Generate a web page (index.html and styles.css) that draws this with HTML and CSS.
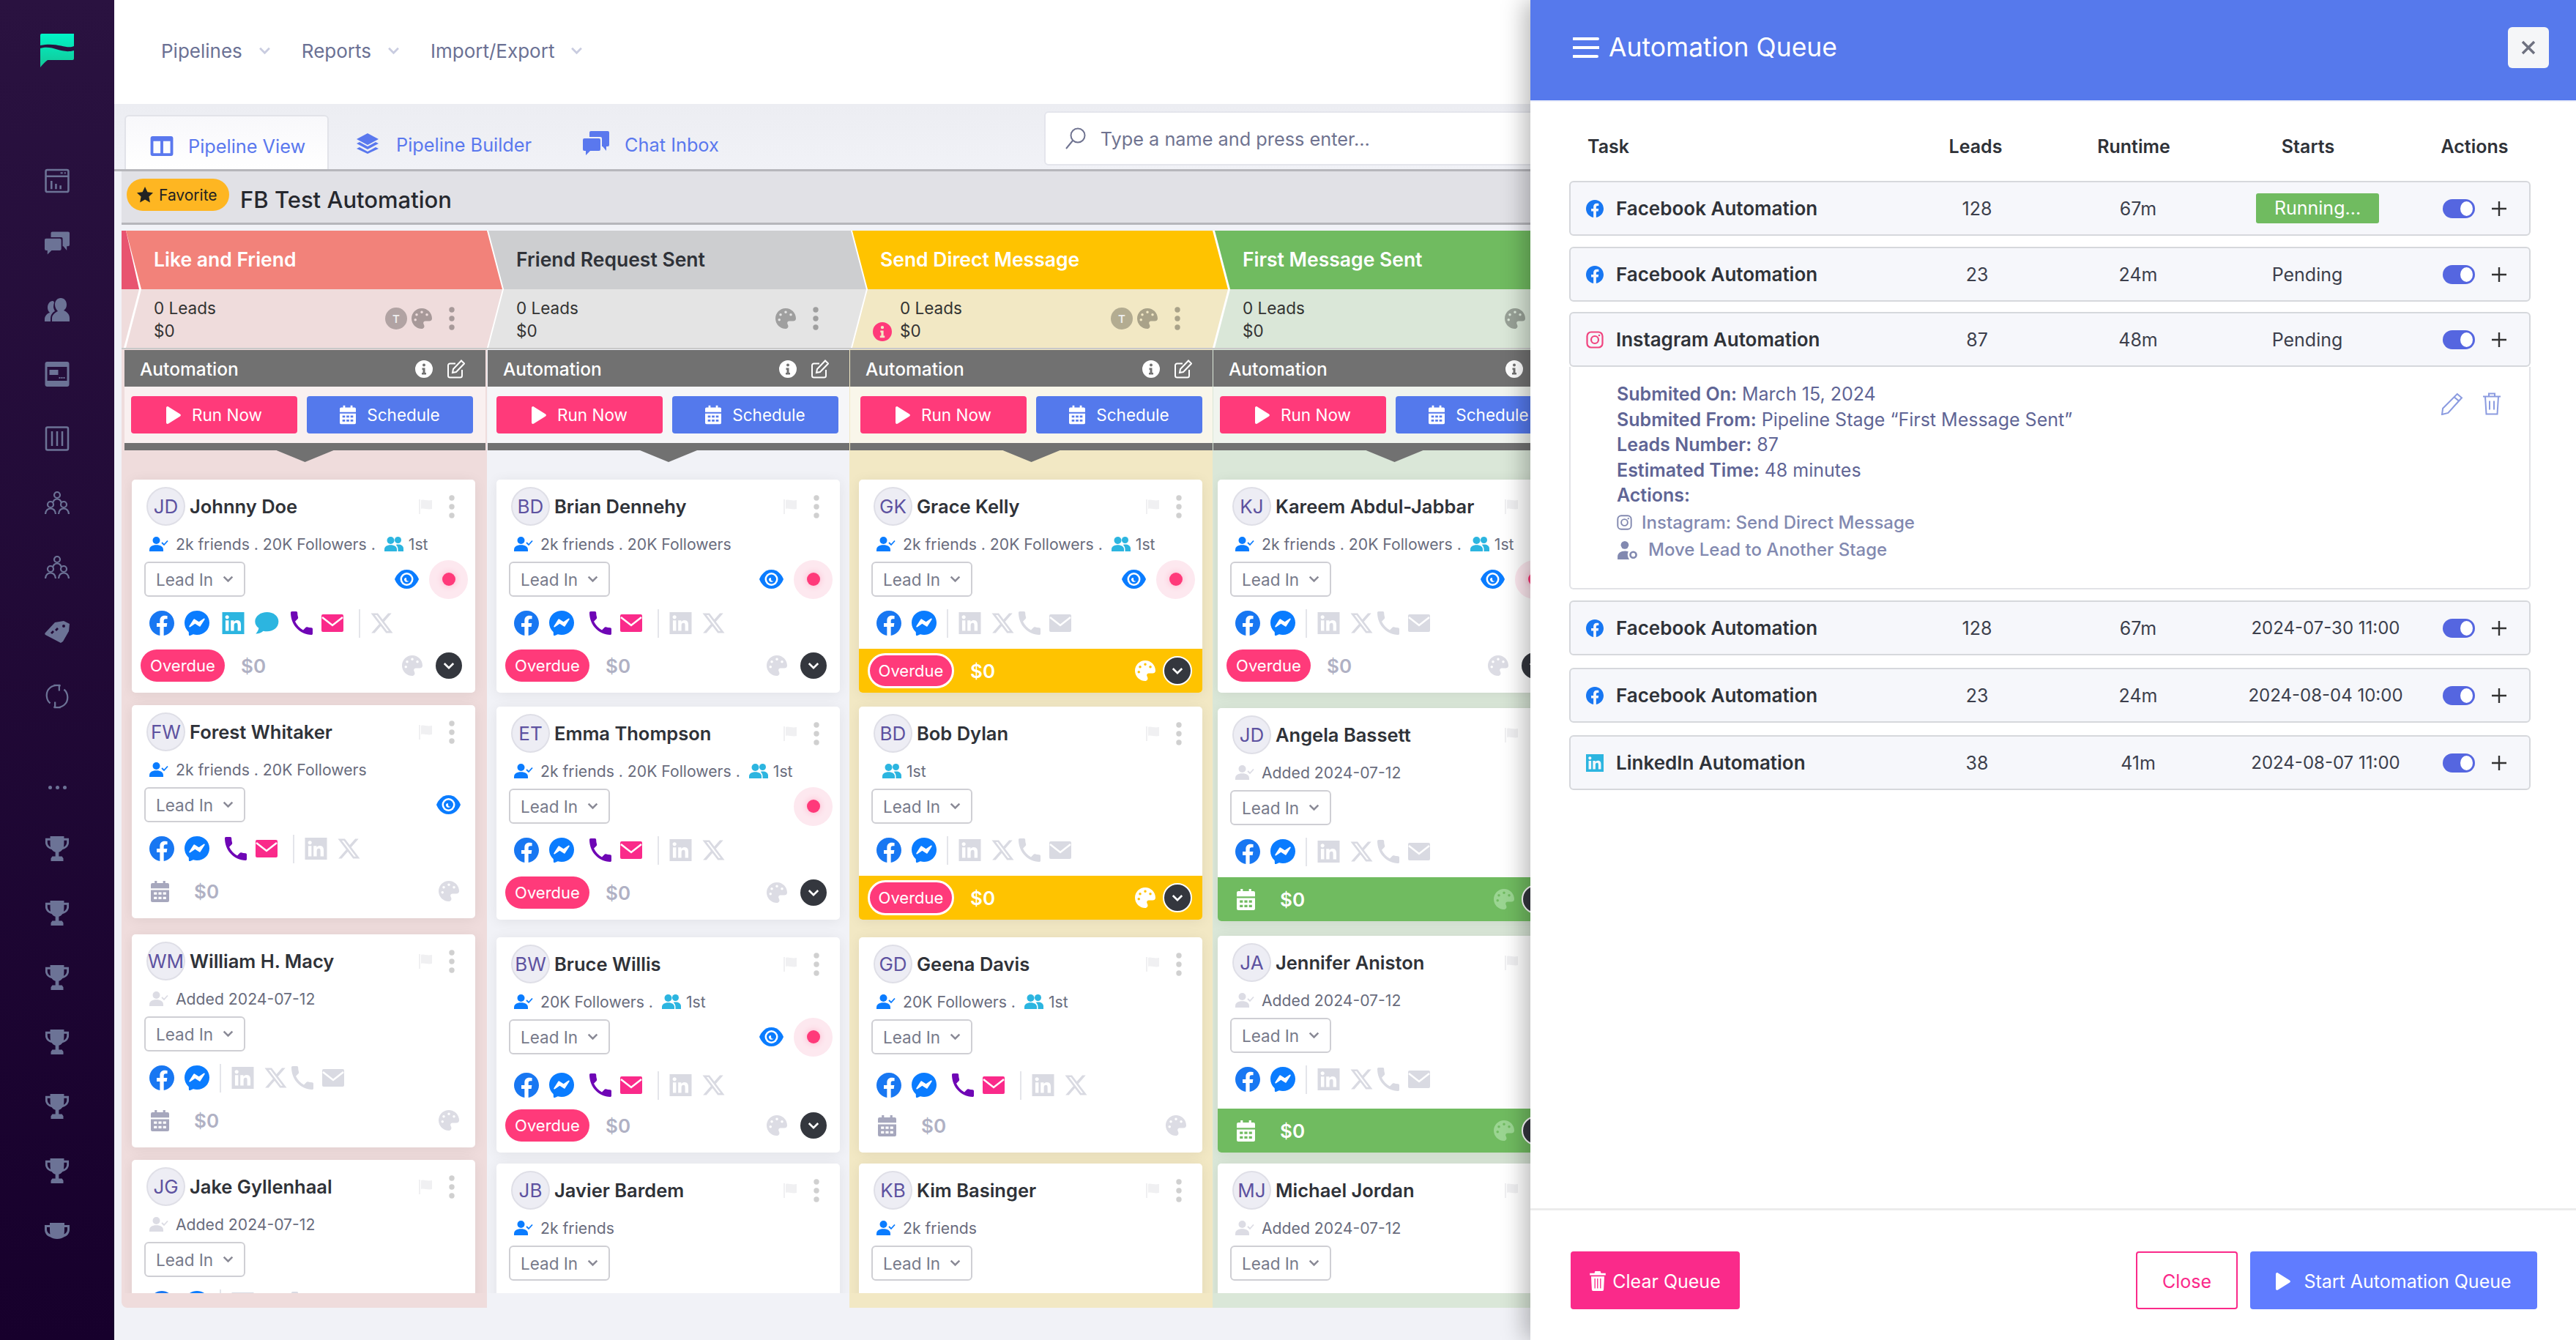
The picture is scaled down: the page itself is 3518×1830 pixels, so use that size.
FILE: index.html
```html
<!DOCTYPE html>
<html lang="en">
<head>
    <meta charset="UTF-8">
    <title>Pipeline View</title>
    <link rel="stylesheet" href="styles.css">
</head>
<body>
    <svg class="defs" xmlns="http://www.w3.org/2000/svg">
        <linearGradient id="g-logo" gradientUnits="userSpaceOnUse" x1="0" y1="0" x2="0" y2="46"><stop offset="0" stop-color="#00f5c8"/><stop offset="1" stop-color="#14c596"/></linearGradient>
        <symbol id="i-fb" viewBox="0 0 24 24"><path d="M24 12.07C24 5.4 18.63 0 12 0S0 5.4 0 12.07c0 6.03 4.39 11.02 10.13 11.93v-8.44H7.08v-3.49h3.05V9.41c0-3.02 1.79-4.69 4.53-4.69 1.31 0 2.68.24 2.68.24v2.97h-1.51c-1.49 0-1.96.93-1.96 1.89v2.26h3.33l-.53 3.49h-2.8V24C19.61 23.09 24 18.1 24 12.07z"/></symbol>
        <symbol id="i-ms" viewBox="0 0 24 24"><path d="M12 0C5.24 0 0 4.952 0 11.64c0 3.499 1.434 6.521 3.769 8.61a.96.96 0 0 1 .323.683l.065 2.135a.96.96 0 0 0 1.347.85l2.381-1.053a.96.96 0 0 1 .641-.046A13 13 0 0 0 12 23.28c6.76 0 12-4.952 12-11.64S18.76 0 12 0m6.806 7.44c.522-.03.971.567.63 1.094l-4.178 6.457a.707.707 0 0 1-.977.208l-3.87-2.504a.44.44 0 0 0-.49.007l-4.363 3.01c-.637.438-1.415-.317-.995-.966l4.179-6.457a.706.706 0 0 1 .977-.21l3.87 2.505c.15.097.344.094.491-.007l4.362-3.008a.7.7 0 0 1 .364-.13"/></symbol>
        <symbol id="i-li" viewBox="0 0 24 24"><path d="M20.447 20.452h-3.554v-5.569c0-1.328-.027-3.037-1.852-3.037-1.853 0-2.136 1.445-2.136 2.939v5.667H9.351V9h3.414v1.561h.046c.477-.9 1.637-1.85 3.37-1.85 3.601 0 4.267 2.37 4.267 5.455v6.286zM5.337 7.433c-1.144 0-2.063-.926-2.063-2.065 0-1.138.92-2.063 2.063-2.063 1.14 0 2.064.925 2.064 2.063 0 1.139-.925 2.065-2.064 2.065zm1.782 13.019H3.555V9h3.564v11.452zM24 0H0v24h24z"/></symbol>
        <symbol id="i-wa" viewBox="0 0 24 22"><path d="M12.500 0C5.900 0 .5 4 .5 9.300c0 2.700 1.400 5 3.700 6.700-.2 1.700-1.200 4-3 5.600 3 0 5.800-1 7.600-2.700 1.200.3 2.400.4 3.700.4 6.600 0 11.500-4.300 11.500-10C24 4 19.100 0 12.500 0z"/></symbol>
        <symbol id="i-ph" viewBox="3 3 18 18" preserveAspectRatio="none"><path d="M6.620 10.790c1.440 2.830 3.760 5.140 6.590 6.590l2.200-2.200c.27-.27.67-.36 1.020-.24 1.120.37 2.330.57 3.570.57.55 0 1 .45 1 1V20c0 .55-.45 1-1 1-9.390 0-17-7.610-17-17 0-.55.45-1 1-1h3.500c.55 0 1 .45 1 1 0 1.250.2 2.450.57 3.570.11.35.03.74-.25 1.020l-2.200 2.200z"/></symbol>
        <symbol id="i-em" viewBox="0 0 30 24"><rect width="30" height="24" rx="2" fill="currentColor"/><path d="M1 4l14 11L29 4" fill="none" stroke="#fff" stroke-width="2.500"/></symbol>
        <symbol id="i-x" viewBox="0 0 24 24"><path d="M18.901 1.153h3.680l-8.040 9.190L24 22.846h-7.406l-5.800-7.584-6.638 7.584H.474l8.600-9.830L0 1.154h7.594l5.243 6.932ZM17.610 20.644h2.039L6.486 3.240H4.298Z"/></symbol>
        <symbol id="i-eye" viewBox="0 0 33 26"><path d="M16.500 0C26 0 31 8 33 13c-2 5-7 13-16.500 13S2 18 0 13C2 8 7 0 16.500 0z" fill="currentColor"/><circle cx="16.500" cy="13" r="9" fill="#fff"/><circle cx="16.500" cy="13" r="6.500" fill="currentColor"/><path d="M13 14c1 3.500 5 3.500 6.500 1.500-2 .5-3.500 0-3.500-3 0-1-.2-1.500-1-1.500-1.300.3-2.300 1.500-2 3z" fill="#fff"/></symbol>
        <symbol id="i-user" viewBox="0 0 26 20"><circle cx="9.500" cy="5" r="5"/><path d="M0 20v-2c0-4.500 3.500-6.800 9.500-6.800S19 13.500 19 18v2z"/><path d="M17 8l3 3 5-5.500" fill="none" stroke="currentColor" stroke-width="1.800"/></symbol>
        <symbol id="i-group" viewBox="0 0 26 20"><circle cx="8.500" cy="5" r="5"/><circle cx="18.500" cy="4.500" r="4.500"/><path d="M0 20v-3c0-3.500 3.500-5.800 8.500-5.800s8.500 2.300 8.500 5.800v3z"/><path d="M18.500 20v-3c0-2.500-1-4.500-2.800-6 1-.4 2-.5 3-.5 4 0 7.300 2 7.300 5.500v4z"/></symbol>
        <symbol id="i-palette" viewBox="0 0 512 512"><path fill-rule="evenodd" d="M512 256c0 .9 0 1.800 0 2.700-.4 36.500-33.600 61.300-70.100 61.300H344c-26.500 0-48 21.500-48 48 0 3.400.4 6.700 1 9.900 2.100 10.200 6.500 20 10.800 29.900 6.100 13.800 12.100 27.500 12.100 42 0 31.800-21.600 60.700-53.400 62-3.500.1-7 .2-10.600.2C114.600 512 0 397.400 0 256S114.600 0 256 0s256 114.600 256 256zM128 288a32 32 0 1 0-64 0 32 32 0 1 0 64 0zm0-96a32 32 0 1 0 0-64 32 32 0 1 0 0 64zM288 96a32 32 0 1 0-64 0 32 32 0 1 0 64 0zm96 96a32 32 0 1 0 0-64 32 32 0 1 0 0 64z"/></symbol>
        <symbol id="i-cal" viewBox="0 0 24 28"><path fill-rule="evenodd" d="M5 0h3v3h8V0h3v3h3a2 2 0 0 1 2 2v5H0V5a2 2 0 0 1 2-2h3zM0 12h24v14a2 2 0 0 1-2 2H2a2 2 0 0 1-2-2zM4 15v3h4v-3zM10 15v3h4v-3zM16 15v3h4v-3zM4 21v3h4v-3zM10 21v3h4v-3zM16 21v3h4v-3z"/></symbol>
        <symbol id="i-flag" viewBox="0 0 18 20"><path d="M0 0h2v20H0zM3 1c4-1.500 8 1.500 15 0v12c-6 1.500-11-1.500-15 0z"/></symbol>
        <symbol id="i-dots" viewBox="0 0 8 32"><circle cx="4" cy="4" r="3.700"/><circle cx="4" cy="16" r="3.700"/><circle cx="4" cy="28" r="3.700"/></symbol>
        <symbol id="i-chev" viewBox="0 0 18 12"><path d="M2 2l7 7 7-7" fill="none" stroke="currentColor" stroke-width="3"/></symbol>
        <symbol id="i-play" viewBox="0 0 20 24"><path d="M0 2C0 .3 1.700-.5 3 .4l16 10c1.200.8 1.200 2.400 0 3.200L3 23.600c-1.300.9-3 .1-3-1.600z"/></symbol>
        <symbol id="i-info" viewBox="0 0 24 24"><path fill-rule="evenodd" d="M12 0a12 12 0 1 0 0 24 12 12 0 0 0 0-24zM12 4.500a2 2 0 1 1 0 4 2 2 0 0 1 0-4zM9.500 10.500h4V17H15v2.500H9V17h1.500v-4h-1z"/></symbol>
        <symbol id="i-edit" viewBox="0 0 24 26"><path d="M20 14v8a2.500 2.500 0 0 1-2.500 2.500h-14A2.500 2.500 0 0 1 1 22V8a2.500 2.500 0 0 1 2.500-2.500H11M19 1.500l4 4L12 17l-5 1 1-5z" fill="none" stroke="currentColor" stroke-width="2"/></symbol>
        <symbol id="i-chat" viewBox="0 0 36 33"><path d="M11 0h23a2 2 0 0 1 2 2v17a2 2 0 0 1-2 2h-2v6l-5-6h-1V10a2 2 0 0 0-2-2H9V2a2 2 0 0 1 2-2z"/><path d="M2 10h20a2 2 0 0 1 2 2v13a2 2 0 0 1-2 2H10l-6 6v-6H2a2 2 0 0 1-2-2V12a2 2 0 0 1 2-2z"/></symbol>
        <symbol id="i-panes" viewBox="0 0 32 28"><path fill-rule="evenodd" d="M3 0h26a3 3 0 0 1 3 3v22a3 3 0 0 1-3 3H3a3 3 0 0 1-3-3V3a3 3 0 0 1 3-3zM4 7v17h10V7zM18 7v17h10V7z"/></symbol>
        <symbol id="i-stack" viewBox="0 0 32 32"><path d="M16 0l15 8-15 8L1 8zM1 14l4-2 11 6 11-6 4 2-15 8zM1 21l4-2 11 6 11-6 4 2-15 7z"/></symbol>
        <symbol id="i-search" viewBox="0 0 30 30"><circle cx="18" cy="11" r="9.500" fill="none" stroke="currentColor" stroke-width="2"/><path d="M11 18L2 29" stroke="currentColor" stroke-width="2"/></symbol>
        <symbol id="i-star" viewBox="0 0 24 24"><path d="M12 0l3.700 7.900 8.300 1.100-6.100 5.800 1.600 8.600L12 19.200l-7.500 4.200 1.600-8.600L0 9l8.300-1.100z"/></symbol>
        <symbol id="i-layout" viewBox="0 0 33 32"><rect x="1.500" y="1.500" width="30" height="29" rx="2" fill="none" stroke="currentColor" stroke-width="2.500"/><path d="M1 10h31M9 16v11M15 20v7M21 22v5" fill="none" stroke="currentColor" stroke-width="2.500"/><path d="M21 5.500h3M26 5.500h2" stroke="currentColor" stroke-width="2"/></symbol>
        <symbol id="i-people" viewBox="0 0 34 32"><path d="M22 0c-5 0-8 4-8 9 0 4 2 7 4 9-4 2-8 5-8 10v4h24v-5c0-4-3-8-8-10 3-2 4-5 4-8 0-5-3-9-8-9z"/><path d="M11 4c-4 0-7 4-7 9 0 3 1 5 3 7-4 1-7 5-7 9v3h8v-4c0-4 2-8 6-10-1-2-2-4-2-6 0-2 .5-4 1-6-.6-1.500-1.200-2-2-2z"/></symbol>
        <symbol id="i-board" viewBox="0 0 33 34"><path fill-rule="evenodd" d="M3 0h27a3 3 0 0 1 3 3v28a3 3 0 0 1-3 3H3a3 3 0 0 1-3-3V3a3 3 0 0 1 3-3zM3 7v19h27V7zM6 11h12v7H6zM22 21h2v2h-2zM25 21h2v2h-2zM19 21h2v2h-2z"/></symbol>
        <symbol id="i-cols" viewBox="0 0 33 34"><rect x="1.500" y="1.500" width="30" height="31" rx="2" fill="none" stroke="currentColor" stroke-width="2.500"/><path d="M9.500 7v20M16.500 7v20M23.500 7v20" stroke="currentColor" stroke-width="2.500"/></symbol>
        <symbol id="i-tree" viewBox="0 0 34 32"><g fill="none" stroke="currentColor" stroke-width="2.200"><circle cx="17" cy="5" r="4"/><path d="M11 16c1-4 3-5.500 6-5.500s5 1.500 6 5.500"/><circle cx="8" cy="18" r="4"/><circle cx="26" cy="18" r="4"/><path d="M1 31c.5-5 3-7.500 7-7.500s6.500 2.500 7 7.500M19 31c.5-5 3-7.500 7-7.500s6.500 2.500 7 7.500"/></g></symbol>
        <symbol id="i-tag" viewBox="0 0 34 30"><path fill-rule="evenodd" d="M14 2L26 0l8 4-1 10-8 14-3 2L1 19c-1-1-1-2 0-3zM11 13l-3 3 2 2 3-3zM17 9l-3 3 2 2 3-3zM26 5a2 2 0 1 0 0 4 2 2 0 0 0 0-4z"/></symbol>
        <symbol id="i-refresh" viewBox="0 0 34 36"><path d="M22 2.500C9 0 1 8 2 18c.3 4 2 7.500 5 10M12 33.500C25 36 33 28 32 18c-.3-4-2-7.500-5-10M14 26v8h8M20 10V2h-8" fill="none" stroke="currentColor" stroke-width="2.400"/></symbol>
        <symbol id="i-trophy" viewBox="0 0 34 36"><path fill-rule="evenodd" d="M7 0h20v3h7v6c0 5-4 9-9 10-1.500 2-3.500 3.500-5.500 4v6H24l2 3v4H8v-4l2-3h4.500v-6c-2-.5-4-2-5.500-4-5-1-9-5-9-10V3h7zM3 6v3c0 3 2 5.500 4.500 6.500C7 13 7 10 7 6zM31 6h-4c0 4 0 7-.5 9.500C29 14.500 31 12 31 9z"/></symbol>
        <symbol id="i-cup" viewBox="0 0 34 22"><path fill-rule="evenodd" d="M7 0h20v3h7v6c0 5-3 9-7 10-3 2-6 3-10 3s-7-1-10-3c-4-1-7-5-7-10V3h7zM3 6v3c0 3 2 5.500 4.500 6.500C7 13 7 10 7 6zM31 6h-4c0 4 0 7-.5 9.500C29 14.500 31 12 31 9z"/></symbol>
        <symbol id="i-ig" viewBox="0 0 24 24"><rect x="1.500" y="1.500" width="21" height="21" rx="5.500" fill="none" stroke="currentColor" stroke-width="2.200"/><circle cx="12" cy="12" r="5" fill="none" stroke="currentColor" stroke-width="2.200"/><circle cx="18" cy="6" r="1.300"/></symbol>
        <symbol id="i-usercog" viewBox="0 0 30 28"><circle cx="11" cy="6" r="6"/><path d="M0 28v-4c0-6 5-9 11-9 2 0 4 .3 5.500 1-1 2-1.500 4-1 6 .3 2 1 4 2.500 6z"/><circle cx="24" cy="21" r="4.500" fill="none" stroke="currentColor" stroke-width="3"/></symbol>
        <symbol id="i-pencil" viewBox="0 0 30 30"><path d="M22 2l6 5L10 27l-8 2 1-8zM18 6l6 5" fill="none" stroke="currentColor" stroke-width="2"/></symbol>
        <symbol id="i-trash" viewBox="0 0 26 30"><path d="M1 5h24M9 5V1h8v4M4 5l1.500 24h15L22 5M10 11v12M16 11v12" fill="none" stroke="currentColor" stroke-width="2"/></symbol>
        <symbol id="i-trashfill" viewBox="0 0 24 30"><path fill-rule="evenodd" d="M8 0h8l1 3h7v3H0V3h7zM2 8h20l-1 20a2 2 0 0 1-2 2H5a2 2 0 0 1-2-2zM7 11v15h1.500V11zM11 11v15h1.500V11zM15.500 11v15H17V11z"/></symbol>
        <symbol id="i-plus" viewBox="0 0 22 22"><path d="M11 1v20M1 11h20" stroke="currentColor" stroke-width="2.400"/></symbol>
        <symbol id="i-close" viewBox="0 0 20 20"><path d="M2 2l16 16M18 2L2 18" stroke="currentColor" stroke-width="3.400"/></symbol>
        <symbol id="i-menu" viewBox="0 0 36 28"><path d="M1 2h33M0 14h36M1 26h32" stroke="currentColor" stroke-width="4" stroke-linecap="round"/></symbol>
        <symbol id="i-logo" viewBox="0 0 46 46"><path d="M2 0h44v17c-10 5-22-6-46-1V2a2 2 0 0 1 2-2z"/><path d="M0 20c18-5 28 8 46 3v11a2 2 0 0 1-2 2H10c-4 3-7 6-10 10z"/></symbol>
    </svg>

    <div class="app">
        <aside class="side">
            <svg class="side-logo"><use href="#i-logo"/></svg>
            <nav class="side-nav">
                <span class="side-item"><svg><use href="#i-layout"/></svg></span>
                <span class="side-item side-up"><svg><use href="#i-chat"/></svg></span>
                <span class="side-item"><svg><use href="#i-people"/></svg></span>
                <span class="side-item"><svg><use href="#i-board"/></svg></span>
                <span class="side-item"><svg><use href="#i-cols"/></svg></span>
                <span class="side-item"><svg><use href="#i-tree"/></svg></span>
                <span class="side-item"><svg><use href="#i-tree"/></svg></span>
                <span class="side-item"><svg><use href="#i-tag"/></svg></span>
                <span class="side-item"><svg><use href="#i-refresh"/></svg></span>
                <span class="side-more"><i></i><i></i><i></i></span>
                <span class="side-item"><svg><use href="#i-trophy"/></svg></span>
                <span class="side-item"><svg><use href="#i-trophy"/></svg></span>
                <span class="side-item"><svg><use href="#i-trophy"/></svg></span>
                <span class="side-item"><svg><use href="#i-trophy"/></svg></span>
                <span class="side-item"><svg><use href="#i-trophy"/></svg></span>
                <span class="side-item"><svg><use href="#i-trophy"/></svg></span>
                <span class="side-item side-cup"><svg><use href="#i-cup"/></svg></span>
            </nav>
        </aside>

        <main class="main">
            <header class="topbar">
                <a class="top-link">Pipelines<svg><use href="#i-chev"/></svg></a>
                <a class="top-link">Reports<svg><use href="#i-chev"/></svg></a>
                <a class="top-link">Import/Export<svg><use href="#i-chev"/></svg></a>
            </header>

            <div class="tabs">
                <a class="tab tab-active"><svg class="tab-panes"><use href="#i-panes"/></svg>Pipeline View</a>
                <a class="tab"><svg class="tab-stack"><use href="#i-stack"/></svg>Pipeline Builder</a>
                <a class="tab"><svg class="tab-chat"><use href="#i-chat"/></svg>Chat Inbox</a>
                <div class="search"><svg><use href="#i-search"/></svg>Type a name and press enter...</div>
            </div>

            <div class="title-bar">
                <span class="fav"><svg><use href="#i-star"/></svg>Favorite</span>
                <h1>FB Test Automation</h1>
            </div>

            <div class="stages">
                <div class="stage-edge"><div></div><div></div></div>
                <div class="stage stage-like">
                    <div class="stage-head">Like and Friend</div>
                    <div class="stage-stats">
                        <div>0 Leads<br>$0</div>
                        <div class="stage-tools"><span class="t-badge">T</span><svg class="tool-palette"><use href="#i-palette"/></svg><svg class="tool-dots"><use href="#i-dots"/></svg></div>
                    </div>
                </div>
                <div class="stage stage-friend">
                    <div class="stage-head">Friend Request Sent</div>
                    <div class="stage-stats">
                        <div>0 Leads<br>$0</div>
                        <div class="stage-tools"><svg class="tool-palette"><use href="#i-palette"/></svg><svg class="tool-dots"><use href="#i-dots"/></svg></div>
                    </div>
                </div>
                <div class="stage stage-send">
                    <div class="stage-head">Send Direct Message</div>
                    <div class="stage-stats">
                        <div class="stats-warn">0 Leads<br><svg class="warn"><use href="#i-info"/></svg>$0</div>
                        <div class="stage-tools"><span class="t-badge">T</span><svg class="tool-palette"><use href="#i-palette"/></svg><svg class="tool-dots"><use href="#i-dots"/></svg></div>
                    </div>
                </div>
                <div class="stage stage-first">
                    <div class="stage-head">First Message Sent</div>
                    <div class="stage-stats">
                        <div>0 Leads<br>$0</div>
                        <div class="stage-tools"><svg class="tool-palette"><use href="#i-palette"/></svg><svg class="tool-dots"><use href="#i-dots"/></svg></div>
                    </div>
                </div>
            </div>

            <!-- columns get filled by app.js -->
            <div class="board" id="board"></div>
        </main>

        <section class="panel">
            <div class="panel-head">
                <svg class="panel-menu"><use href="#i-menu"/></svg>
                <h2>Automation Queue</h2>
                <button class="panel-close"><svg><use href="#i-close"/></svg></button>
            </div>

            <div class="queue">
                <div class="q-grid q-labels">
                    <span class="q-task">Task</span><span>Leads</span><span class="q-runtime">Runtime</span><span class="q-starts">Starts</span><span class="q-actions">Actions</span>
                </div>

                <div class="q-grid q-row">
                    <span class="q-name"><svg class="c-fb"><use href="#i-fb"/></svg>Facebook Automation</span><span>128</span><span>67m</span>
                    <span><b class="running">Running...</b></span>
                    <span class="q-ctl"><i class="toggle"></i><svg><use href="#i-plus"/></svg></span>
                </div>
                <div class="q-grid q-row">
                    <span class="q-name"><svg class="c-fb"><use href="#i-fb"/></svg>Facebook Automation</span><span>23</span><span>24m</span>
                    <span class="q-pending">Pending</span>
                    <span class="q-ctl"><i class="toggle"></i><svg><use href="#i-plus"/></svg></span>
                </div>
                <div class="q-grid q-row q-open">
                    <span class="q-name"><svg class="c-ig"><use href="#i-ig"/></svg>Instagram Automation</span><span>87</span><span>48m</span>
                    <span class="q-pending">Pending</span>
                    <span class="q-ctl"><i class="toggle"></i><svg><use href="#i-plus"/></svg></span>
                </div>
                <div class="q-detail">
                    <div class="q-lines">
                        <p><strong>Submited On:</strong> March 15, 2024</p>
                        <p><strong>Submited From:</strong> Pipeline Stage “First Message Sent”</p>
                        <p><strong>Leads Number:</strong> 87</p>
                        <p><strong>Estimated Time:</strong> 48 minutes</p>
                        <p><strong>Actions:</strong></p>
                        <p class="q-act"><svg class="a-ig"><use href="#i-ig"/></svg>Instagram: Send Direct Message</p>
                        <p class="q-act"><svg class="a-cog"><use href="#i-usercog"/></svg>Move Lead to Another Stage</p>
                    </div>
                    <div class="q-tools"><svg class="q-pencil"><use href="#i-pencil"/></svg><svg class="q-trash"><use href="#i-trash"/></svg></div>
                </div>
                <div class="q-grid q-row">
                    <span class="q-name"><svg class="c-fb"><use href="#i-fb"/></svg>Facebook Automation</span><span>128</span><span>67m</span>
                    <span class="q-date">2024-07-30 11:00</span>
                    <span class="q-ctl"><i class="toggle"></i><svg><use href="#i-plus"/></svg></span>
                </div>
                <div class="q-grid q-row q-wide">
                    <span class="q-name"><svg class="c-fb"><use href="#i-fb"/></svg>Facebook Automation</span><span>23</span><span>24m</span>
                    <span class="q-date">2024-08-04 10:00</span>
                    <span class="q-ctl"><i class="toggle"></i><svg><use href="#i-plus"/></svg></span>
                </div>
                <div class="q-grid q-row q-wide">
                    <span class="q-name"><svg class="c-li"><use href="#i-li"/></svg>LinkedIn Automation</span><span>38</span><span>41m</span>
                    <span class="q-date">2024-08-07 11:00</span>
                    <span class="q-ctl"><i class="toggle"></i><svg><use href="#i-plus"/></svg></span>
                </div>
            </div>

            <div class="panel-foot">
                <button class="btn-clear"><svg><use href="#i-trashfill"/></svg>Clear Queue</button>
                <button class="btn-close">Close</button>
                <button class="btn-start"><svg><use href="#i-play"/></svg>Start Automation Queue</button>
            </div>
        </section>
    </div>

    <script src="app.js"></script>
</body>
</html>
```

FILE: styles.css
```css
* {
    box-sizing: border-box;
}
html, body {
    margin: 0;
    width: 3518px;
    height: 1830px;
    overflow: hidden;
}
body {
    font-family: Inter, "Noto Sans", sans-serif;
    background-color: #f1f2f7;
    color: #2f3238;
}
h1, h2, p {
    margin: 0;
}
svg {
    fill: currentColor;
    display: block;
    flex: none;
}
.defs {
    width: 0;
    height: 0;
    position: absolute;
}
.app {
    display: flex;
    height: 1830px;
    position: relative;
    overflow: hidden;
}

/* sidebar */
.side {
    width: 156px;
    flex: none;
    background: linear-gradient(#2a1240, #17002c);
    color: #6c7396;
    display: flex;
    flex-direction: column;
    align-items: center;
}
.side-logo {
    width: 46px;
    height: 46px;
    margin-top: 46px;
    fill: url(#g-logo);
}
.side-nav {
    margin-top: 111px;
    display: flex;
    flex-direction: column;
    align-items: center;
}
.side-item {
    height: 88px;
    display: flex;
    align-items: center;
}
.side-item svg {
    width: 34px;
    height: 34px;
}
.side-up {
    margin-top: -3px;
    margin-bottom: 3px;
}
.side-cup svg {
    height: 22px;
}
.side-cup {
    margin-top: -6px;
}
.side-more {
    height: 120px;
    margin: 20px 0 -20px;
    display: flex;
    gap: 5px;
    align-items: center;
}
.side-more i {
    width: 5px;
    height: 5px;
    border-radius: 50%;
    background: #6c7396;
}

/* top */
.main {
    flex: 1;
    min-width: 0;
    overflow: hidden;
}
.topbar {
    height: 142px;
    background-color: #fff;
    display: flex;
    align-items: center;
    padding-left: 64px;
    padding-bottom: 4px;
    font-size: 26px;
    color: #6b7194;
    gap: 42px;
}
.top-link {
    display: flex;
    align-items: center;
    gap: 22px;
}
.top-link svg {
    width: 17px;
    height: 11px;
    color: #c9cce0;
}
.tabs {
    height: 92px;
    display: flex;
    padding-left: 14px;
    background: linear-gradient(#ecedf2, #f1f2f7);
    border-bottom: 3px solid #b6b6bb;
}
.tab {
    display: flex;
    align-items: center;
    padding: 22px 33px 0 37px;
    gap: 23px;
    font-size: 25.3px;
    color: #5a78ee;
}
.tab-active {
    margin-top: 15px;
    padding: 8px 33px 0;
    gap: 20px;
    width: 279px;
    background: linear-gradient(#f8f8fb, #fff);
    border: 2px solid #e2e3e9;
    border-bottom: none;
    border-radius: 6px 6px 0 0;
    white-space: nowrap;
}
.tab-panes {
    width: 32px;
    height: 27px;
}
.tab-stack {
    width: 32px;
    height: 32px;
}
.tab-chat {
    width: 36px;
    height: 33px;
    margin-right: -2px;
    margin-top: -5px;
}
.search {
    margin-left: 411px;
    margin-top: 10px;
    height: 74px;
    width: 800px;
    flex: none;
    background-color: #fff;
    border: 2px solid #e4e5ec;
    border-radius: 6px;
    display: flex;
    align-items: center;
    padding-left: 26px;
    gap: 19px;
    font-size: 25.3px;
    color: #6f7390;
}
.search svg {
    width: 30px;
    height: 30px;
}
.title-bar {
    margin-left: 10px;
    height: 73px;
    background-color: #e1e1e6;
    border-bottom: 3px solid #b6b6bb;
    display: flex;
    align-items: center;
    padding-left: 7px;
    gap: 15px;
}
.fav {
    height: 44px;
    width: 140px;
    margin-top: -6px;
    border-radius: 22px;
    background-color: #feb622;
    color: #222;
    font-size: 21px;
    display: flex;
    align-items: center;
    padding-left: 14px;
    gap: 8px;
}
.fav svg {
    width: 22px;
    height: 24px;
}
h1 {
    margin-top: 6px;
    font-size: 31px;
    font-weight: 500;
    color: #26282e;
}

/* stage chevrons */
.stages {
    margin: 8px 0 0 10px;
    display: flex;
    height: 160px;
    background-color: #fff;
}
.stage-edge {
    width: 27px;
    flex: none;
}
.stage-edge div {
    height: 80px;
    background-color: #e85470;
    clip-path: polygon(0 0, 6px 0, 24px 100%, 0 100%);
}
.stage-edge div + div {
    background-color: #efdcdc;
    clip-path: polygon(0 0, 24px 0, 3px 100%, 0 100%);
}
.stage {
    flex: none;
    margin-left: -19px;
}
.stage-like {
    width: 514px;
    margin-left: -21px;
    --head: #f2827a;
    --stat: #efdcdc;
    --head-text: #fff;
}
.stage-friend {
    width: 516px;
    --head: #cdced0;
    --stat: #e4e4e4;
    --head-text: #2f3238;
}
.stage-send {
    width: 513px;
    --head: #ffc300;
    --stat: #f2e8c4;
    --head-text: #fff;
}
.stage-first {
    width: 520px;
    margin-left: -18px;
    --head: #70bb60;
    --stat: #dae7d8;
    --head-text: #fff;
}
.stage-head {
    height: 80px;
    background-color: var(--head);
    color: var(--head-text);
    clip-path: polygon(0 0, calc(100% - 21px) 0, 100% 100%, 21px 100%);
    padding: 0 0 2px 38px;
    display: flex;
    align-items: center;
    font-size: 26.5px;
    font-weight: 600;
}
.stage-stats {
    height: 80px;
    background-color: var(--stat);
    clip-path: polygon(21px 0, 100% 0, calc(100% - 21px) 100%, 0 100%);
    padding: 10px 65px 0 38px;
    display: flex;
    justify-content: space-between;
    font-size: 22.5px;
    line-height: 31px;
    color: #333;
}
.stats-warn {
    padding-left: 27px;
}
.warn {
    display: inline-block;
    width: 26px;
    height: 26px;
    margin: 0 11px -6px -37px;
    color: #ff3a7a;
}
.stage-tools {
    display: flex;
    align-items: center;
    gap: 6px;
    height: 60px;
    color: rgba(0, 0, 0, .3);
}
.t-badge {
    width: 30px;
    height: 30px;
    border-radius: 50%;
    background: rgba(0, 0, 0, .26);
    color: #eee;
    font-size: 15px;
    font-weight: 600;
    display: flex;
    align-items: center;
    justify-content: center;
}
.tool-palette {
    width: 28px;
    height: 30px;
}
.tool-dots {
    width: 8px;
    height: 32px;
    margin-left: 17px;
}

/* board */
.board {
    display: flex;
    margin-left: 10px;
    border-top: 2px solid #c9c9c9;
}
.col {
    flex: none;
    width: 496px;
    height: 1309px;
    padding: 1px 0 0 1px;
}
.col-like {
    width: 499px;
    padding: 1px 2px 0 4px;
    background-color: #efdcdc;
    border-bottom-left-radius: 8px;
    --tools: #f9f0f0;
}
.col-friend {
    width: 495px;
    background-color: #f1f2f7;
    --tools: #f6f6f8;
}
.col-send {
    background-color: #f2e8c4;
    --tools: #f9f6ea;
}
.col-first {
    background-color: #dae7d8;
    --tools: #f0f4ee;
}
.auto-bar {
    height: 50px;
    background-color: #717171;
    color: #fff;
    font-size: 24.5px;
    font-weight: 500;
    display: flex;
    align-items: center;
    padding: 2px 28px 0 21px;
}
.auto-bar span {
    flex: 1;
}
.auto-info {
    width: 24px;
    height: 24px;
}
.auto-edit {
    width: 24px;
    height: 26px;
    margin-left: 20px;
}
.run-row {
    height: 77px;
    background-color: var(--tools);
    display: flex;
    gap: 13px;
    padding: 13px 0 0 9px;
}
.col-friend .run-row {
    padding-left: 12px;
}
.col-send .run-row {
    padding-left: 14px;
}
.run-row button {
    width: 227px;
    height: 51px;
    border: none;
    border-radius: 4px;
    color: #fff;
    font: 400 22.5px Inter, sans-serif;
    display: flex;
    align-items: center;
    justify-content: center;
    gap: 15px;
}
.btn-run {
    background-color: #ff3a7a;
}
.btn-run svg {
    width: 20px;
    height: 24px;
}
.btn-sched {
    background-color: #5479ec;
}
.btn-sched svg {
    width: 22px;
    height: 27px;
}
.strip {
    height: 10px;
    background-color: #717171;
}
.strip-tip {
    width: 78px;
    height: 16px;
    margin: 0 auto 12px;
    background-color: #717171;
    clip-path: polygon(0 0, 100% 0, 50% 100%);
}
.cards {
    height: 1123px;
    overflow: hidden;
    padding: 12px 0 0 10px;
}
.col-friend .cards, .col-send .cards {
    padding-left: 12px;
}
.col-first .cards {
    padding-left: 6px;
}

/* lead card */
.card {
    width: 469px;
    background-color: #fff;
    border-radius: 5px;
    box-shadow: 0 2px 18px rgba(0, 0, 0, .07);
    overflow: hidden;
}
.card-top {
    display: flex;
    align-items: center;
    padding: 10px 28px 0 20px;
    height: 63px;
}
.avatar {
    width: 53px;
    height: 53px;
    border-radius: 50%;
    background-color: #ededf4;
    border: 2px solid #dfdfe7;
    color: #5d52a0;
    font-size: 26px;
    white-space: nowrap;
    display: flex;
    align-items: center;
    justify-content: center;
    flex: none;
}
.name {
    flex: 1;
    margin-left: 6px;
    font-size: 25.5px;
    font-weight: 600;
}
.flag {
    width: 18px;
    height: 20px;
    color: #f0f0f2;
    margin-right: 23px;
}
.dots {
    width: 8px;
    height: 32px;
    color: #d0d0d0;
}
.meta {
    height: 49px;
    padding-left: 24px;
    display: flex;
    align-items: center;
    font-size: 21.2px;
    color: #696c7d;
}
.meta svg {
    width: 26px;
    height: 20px;
    margin-right: 10px;
}
.meta .ic-added {
    color: #dcdce4;
}
.ic-user {
    color: #0a7cff;
}
.meta .ic-group {
    color: #2cb5e0;
    margin-left: 12px;
    margin-right: 7px;
}
.meta .ic-group:first-child {
    margin-left: 8px;
}
.stage-row {
    height: 48px;
    display: flex;
    align-items: center;
    padding: 0 10px 0 17px;
}
.lead-select {
    width: 138px;
    height: 48px;
    border: 2px solid #cfcfd4;
    border-radius: 6px;
    display: flex;
    align-items: center;
    justify-content: space-between;
    padding: 0 14px;
    font-size: 22.5px;
    color: #777a8a;
}
.lead-select svg {
    width: 15px;
    height: 10px;
    color: #8a8a96;
}
.eye {
    width: 33px;
    height: 26px;
    color: #0a7cff;
    margin-left: auto;
}
.eye-only {
    margin-right: 10px;
}
.rec {
    width: 53px;
    height: 53px;
    margin-left: 14px;
    border-radius: 50%;
    background-color: #fde8ef;
    display: flex;
    align-items: center;
    justify-content: center;
}
.stage-row > .rec:nth-child(2) {
    margin-left: auto;
}
.rec i {
    width: 18px;
    height: 18px;
    border-radius: 50%;
    background-color: #ff3a7a;
    box-shadow: 0 0 8px rgba(255, 58, 122, .3);
}
.social {
    height: 63px;
    padding: 9px 0 0 24px;
    display: flex;
    align-items: center;
    gap: 14px;
}
.social-low {
    margin: 6px 0 -3px;
}
.so-fb, .so-ms {
    width: 34px;
    height: 34px;
}
.so-fb {
    color: #1877f2;
}
.so-ms {
    color: #0a7cff;
}
.so-li {
    width: 31px;
    height: 30px;
    color: #2cb5e0;
}
.so-wa {
    width: 34px;
    height: 30px;
    color: #2cb5e0;
}
.so-ph {
    width: 30px;
    height: 32px;
    color: #6f06b5;
}
.so-em {
    width: 30px;
    height: 24px;
    color: #fa2a8a;
}
.so-x {
    width: 31px;
    height: 30px;
}
.so-off {
    color: #d9dae2;
}
.so-ms + .so-ph {
    margin-left: 7px;
}
.so-ms + .so-li {
    margin-left: 3px;
}
.so-li + .so-wa {
    margin-left: -1px;
}
.so-wa + .so-ph {
    margin-left: 2px;
}
.so-x + .so-ph {
    margin-left: -8px;
}
.so-ph + .so-em {
    margin-left: -2px;
}
.so-em + .sep {
    margin-left: 7px;
}
.sep {
    width: 2px;
    height: 39px;
    background-color: #e4e5ea;
}
.foot {
    height: 68px;
    padding: 0 18px 6px 12px;
    display: flex;
    align-items: center;
}
.overdue {
    width: 115px;
    height: 44px;
    border-radius: 22px;
    background-color: #ff3a7a;
    color: #fff;
    font-size: 22px;
    display: flex;
    align-items: center;
    justify-content: center;
}
.foot-cal {
    width: 25px;
    height: 31px;
    margin-left: 14px;
    color: #a6a7bd;
}
.amount {
    margin-left: 22px;
    font-size: 26px;
    font-weight: 600;
    color: #b0b1c4;
}
.foot-cal + .amount {
    margin-left: 34px;
}
.foot-palette {
    width: 28px;
    height: 30px;
    margin-left: auto;
    margin-right: 4px;
    color: #dcdce4;
}
.more {
    width: 36px;
    height: 36px;
    margin-left: 14px;
    border-radius: 50%;
    background-color: #34373e;
    color: #fff;
    display: flex;
    align-items: center;
    justify-content: center;
}
.more svg {
    width: 16px;
    height: 11px;
}
.foot-band {
    height: 60px;
    margin-top: 8px;
    padding: 0 14px 0 12px;
    background-color: #ffc300;
}
.foot-band-tall {
    margin-top: 13px;
}
.col-first .foot-band {
    background-color: #70bb60;
}
.foot-band .overdue {
    width: 118px;
    height: 48px;
    border-radius: 24px;
    border: 3px solid #fff;
}
.foot-band .amount, .foot-band .foot-cal, .foot-band .foot-palette {
    color: #fff;
}
.col-first .foot-band .foot-palette {
    color: #9bd592;
}
.foot-band .more {
    width: 40px;
    height: 40px;
    margin-left: 6px;
    border: 2px solid #fff;
}

/* queue panel */
.panel {
    position: absolute;
    top: 0;
    right: 0;
    width: 1428px;
    height: 1830px;
    background-color: #fff;
    box-shadow: -8px 0 30px rgba(0, 0, 0, .28);
    display: flex;
    flex-direction: column;
}
.panel-head {
    height: 139px;
    background-color: #5679ec;
    border-bottom: 2px solid #eef0fb;
    display: flex;
    align-items: center;
    padding: 0 37px 8px 58px;
    color: #fff;
}
.panel-menu {
    width: 36px;
    height: 28px;
}
.panel-head h2 {
    flex: 1;
    margin-left: 13px;
    font-size: 35.5px;
    font-weight: 400;
}
.panel-close {
    width: 56px;
    height: 56px;
    padding: 0;
    border: none;
    border-radius: 6px;
    background-color: #f5f6f8;
    color: #6e7180;
    display: flex;
    align-items: center;
    justify-content: center;
}
.panel-close svg {
    width: 20px;
    height: 20px;
}
.queue {
    flex: 1;
    padding: 0 62px 0 53px;
}
.q-grid {
    display: grid;
    grid-template-columns: 480px 150px 290px 200px 1fr;
    align-items: center;
    text-align: center;
    font-size: 25px;
}
.q-labels {
    height: 108px;
    padding-top: 14px;
    font-weight: 600;
    color: #2f3238;
    font-size: 25px;
}
.q-task {
    text-align: left;
    padding-left: 25px;
}
.q-runtime {
    padding-right: 8px;
}
.q-starts {
    padding-right: 22px;
}
.q-actions {
    padding-left: 40px;
}
.q-row {
    height: 75px;
    margin-top: 15px;
    background-color: #f6f7fb;
    border: 2px solid #d6d8dc;
    border-radius: 6px;
    color: #3c3f4c;
}
.q-labels + .q-row {
    margin-top: 0;
}
.q-open {
    margin-top: 14px;
}
.q-wide {
    margin-top: 17px;
}
.q-name {
    display: flex;
    align-items: center;
    padding-left: 21px;
    gap: 17px;
    font-size: 26px;
    font-weight: 600;
    color: #2f3238;
    text-align: left;
}
.q-name svg {
    width: 24px;
    height: 24px;
}
.c-fb {
    color: #1877f2;
}
.c-ig {
    color: #f0447f;
}
.c-li {
    color: #2cb5e0;
}
.running {
    display: inline-block;
    width: 168px;
    height: 41px;
    line-height: 41px;
    border-radius: 3px;
    background-color: #70bb60;
    color: #fff;
    font-weight: 400;
}
.q-pending {
    padding-right: 28px;
}
.q-date {
    margin: 0 -30px;
    padding-left: 22px;
    white-space: nowrap;
    font-size: 24px;
}
.q-ctl {
    display: flex;
    align-items: center;
    padding-left: 71px;
    color: #333;
}
.q-ctl svg {
    width: 22px;
    height: 22px;
    margin-left: 22px;
}
.toggle {
    position: relative;
    width: 44px;
    height: 26px;
    border-radius: 13px;
    background-color: #5566e0;
}
.toggle::after {
    content: "";
    position: absolute;
    top: 3px;
    right: 3px;
    width: 17px;
    height: 20px;
    border-radius: 50%;
    background-color: #fff;
}
.q-detail {
    height: 304px;
    display: flex;
    justify-content: space-between;
    padding: 20px 38px 0 63px;
    border: 2px solid #e2e3e7;
    border-top: none;
    border-radius: 0 0 6px 6px;
    color: #5f6595;
    font-size: 25px;
    line-height: 34.5px;
}
.q-detail strong {
    font-weight: 600;
}
.q-act {
    display: flex;
    align-items: center;
    font-size: 24px;
    font-weight: 500;
    color: #8289b0;
    margin-top: 3px;
}
.a-ig {
    width: 21px;
    height: 21px;
    margin-right: 13px;
}
.a-cog {
    width: 29px;
    height: 25px;
    margin-right: 14px;
}
.q-tools {
    display: flex;
    gap: 26px;
    color: #8b9be0;
    padding-top: 15px;
}
.q-pencil {
    width: 31px;
    height: 31px;
}
.q-trash {
    width: 26px;
    height: 31px;
}
.panel-foot {
    height: 180px;
    border-top: 3px solid #ececec;
    display: flex;
    align-items: flex-start;
    padding: 56px 53px 0 55px;
}
.panel-foot button {
    height: 79px;
    padding-top: 3px;
    border: none;
    border-radius: 4px;
    font: 400 25px Inter, sans-serif;
    display: flex;
    align-items: center;
    justify-content: center;
}
.btn-clear {
    width: 231px;
    background-color: #fa2a8a;
    color: #fff;
    gap: 9px;
}
.btn-clear svg {
    width: 22px;
    height: 27px;
}
.panel-foot .btn-close {
    width: 139px;
    margin-left: auto;
    background-color: #fff;
    color: #fa2a8a;
    border: 2px solid #fa2a8a;
}
.btn-start {
    width: 392px;
    margin-left: 17px;
    background-color: #607cff;
    color: #fff;
    gap: 18px;
}
.btn-start svg {
    width: 20px;
    height: 26px;
}
```

FILE: app.js
```js
const FULL = { user: '2k friends . 20K Followers .', group: true };
const BOTH = ['fb', 'ms', 'ph', 'em', '|', 'li', 'x'];
const FEW = ['fb', 'ms', '|', 'li', 'x', 'ph', 'em'];
const ADDED = { added: 'Added 2024-07-12' };

const columns = [
    {
        key: 'like',
        cards: [
            { ini: 'JD', name: 'Johnny Doe', meta: FULL, eye: 1, rec: 1, social: ['fb', 'ms', 'li', 'wa', 'ph', 'em', '|', 'x'], foot: 'overdue' },
            { ini: 'FW', name: 'Forest Whitaker', gap: 17, meta: { user: '2k friends . 20K Followers' }, eye: 1, social: BOTH, foot: 'cal', noMore: 1 },
            { ini: 'WM', name: 'William H. Macy', gap: 22, meta: ADDED, social: FEW, foot: 'cal', noMore: 1 },
            { ini: 'JG', name: 'Jake Gyllenhaal', gap: 17, meta: ADDED, social: FEW }
        ]
    },
    {
        key: 'friend',
        cards: [
            { ini: 'BD', name: 'Brian Dennehy', meta: { user: '2k friends . 20K Followers' }, eye: 1, rec: 1, social: BOTH, foot: 'overdue' },
            { ini: 'ET', name: 'Emma Thompson', gap: 19, meta: FULL, rec: 1, social: BOTH, foot: 'overdue' },
            { ini: 'BW', name: 'Bruce Willis', gap: 24, meta: { user: '20K Followers .', group: true }, eye: 1, rec: 1, social: BOTH, foot: 'overdue', low: 1 },
            { ini: 'JB', name: 'Javier Bardem', gap: 15, meta: { user: '2k friends' }, social: BOTH }
        ]
    },
    {
        key: 'send',
        cards: [
            { ini: 'GK', name: 'Grace Kelly', meta: FULL, eye: 1, rec: 1, social: FEW, foot: 'overdue', band: 1 },
            { ini: 'BD', name: 'Bob Dylan', gap: 19, meta: { group: true }, social: FEW, foot: 'overdue', band: 1 },
            { ini: 'GD', name: 'Geena Davis', gap: 24, meta: { user: '20K Followers .', group: true }, social: BOTH, foot: 'cal', noMore: 1, low: 1 },
            { ini: 'KB', name: 'Kim Basinger', gap: 15, meta: { user: '2k friends' }, social: FEW }
        ]
    },
    {
        key: 'first',
        cards: [
            { ini: 'KJ', name: 'Kareem Abdul-Jabbar', meta: FULL, eye: 1, rec: 1, social: FEW, foot: 'overdue' },
            { ini: 'JD', name: 'Angela Bassett', gap: 21, meta: ADDED, social: FEW, foot: 'cal', band: 1 },
            { ini: 'JA', name: 'Jennifer Aniston', gap: 20, meta: ADDED, social: FEW, foot: 'cal', band: 1, tall: 1 },
            { ini: 'MJ', name: 'Michael Jordan', gap: 15, meta: ADDED, social: FEW }
        ]
    }
];

function icon(name, cls) {
    return `<svg class="${cls || ''}"><use href="#i-${name}"/></svg>`;
}

function metaRow(meta) {
    let html = '';
    if (meta.added) html += icon('user', 'ic-added') + meta.added;
    if (meta.user) html += icon('user', 'ic-user') + meta.user;
    if (meta.group) html += icon('group', 'ic-group') + '1st';
    return html;
}

function socialRow(list) {
    const sep = list.indexOf('|');
    return list.map((name, i) => {
        if (name === '|') return '<i class="sep"></i>';
        return icon(name, `so-${name}${i > sep ? ' so-off' : ''}`);
    }).join('');
}

function footRow(card) {
    if (!card.foot) return '';
    const lead = card.foot === 'overdue' ? '<span class="overdue">Overdue</span>' : icon('cal', 'foot-cal');
    const more = card.noMore ? '' : `<span class="more">${icon('chev')}</span>`;
    const band = card.band ? ` foot-band${card.tall ? ' foot-band-tall' : ''}` : '';
    return `<div class="foot${band}">
        ${lead}<span class="amount">$0</span>
        ${icon('palette', 'foot-palette')}${more}
    </div>`;
}

function renderCard(card) {
    const eye = card.eye ? icon('eye', card.rec ? 'eye' : 'eye eye-only') : '';
    const rec = card.rec ? '<span class="rec"><i></i></span>' : '';
    return `<article class="card"${card.gap ? ` style="margin-top:${card.gap}px"` : ''}>
        <div class="card-top">
            <span class="avatar">${card.ini}</span>
            <span class="name">${card.name}</span>
            ${icon('flag', 'flag')}${icon('dots', 'dots')}
        </div>
        <div class="meta">${metaRow(card.meta)}</div>
        <div class="stage-row"><span class="lead-select">Lead In${icon('chev')}</span>${eye}${rec}</div>
        <div class="social${card.low ? ' social-low' : ''}">${socialRow(card.social)}</div>
        ${footRow(card)}
    </article>`;
}

document.getElementById('board').innerHTML = columns.map(col => `
    <section class="col col-${col.key}">
        <div class="auto-bar"><span>Automation</span>${icon('info', 'auto-info')}${icon('edit', 'auto-edit')}</div>
        <div class="run-row">
            <button class="btn-run">${icon('play')}Run Now</button>
            <button class="btn-sched">${icon('cal')}Schedule</button>
        </div>
        <div class="strip"></div>
        <div class="strip-tip"></div>
        <div class="cards">${col.cards.map(renderCard).join('')}</div>
    </section>`).join('');
```
